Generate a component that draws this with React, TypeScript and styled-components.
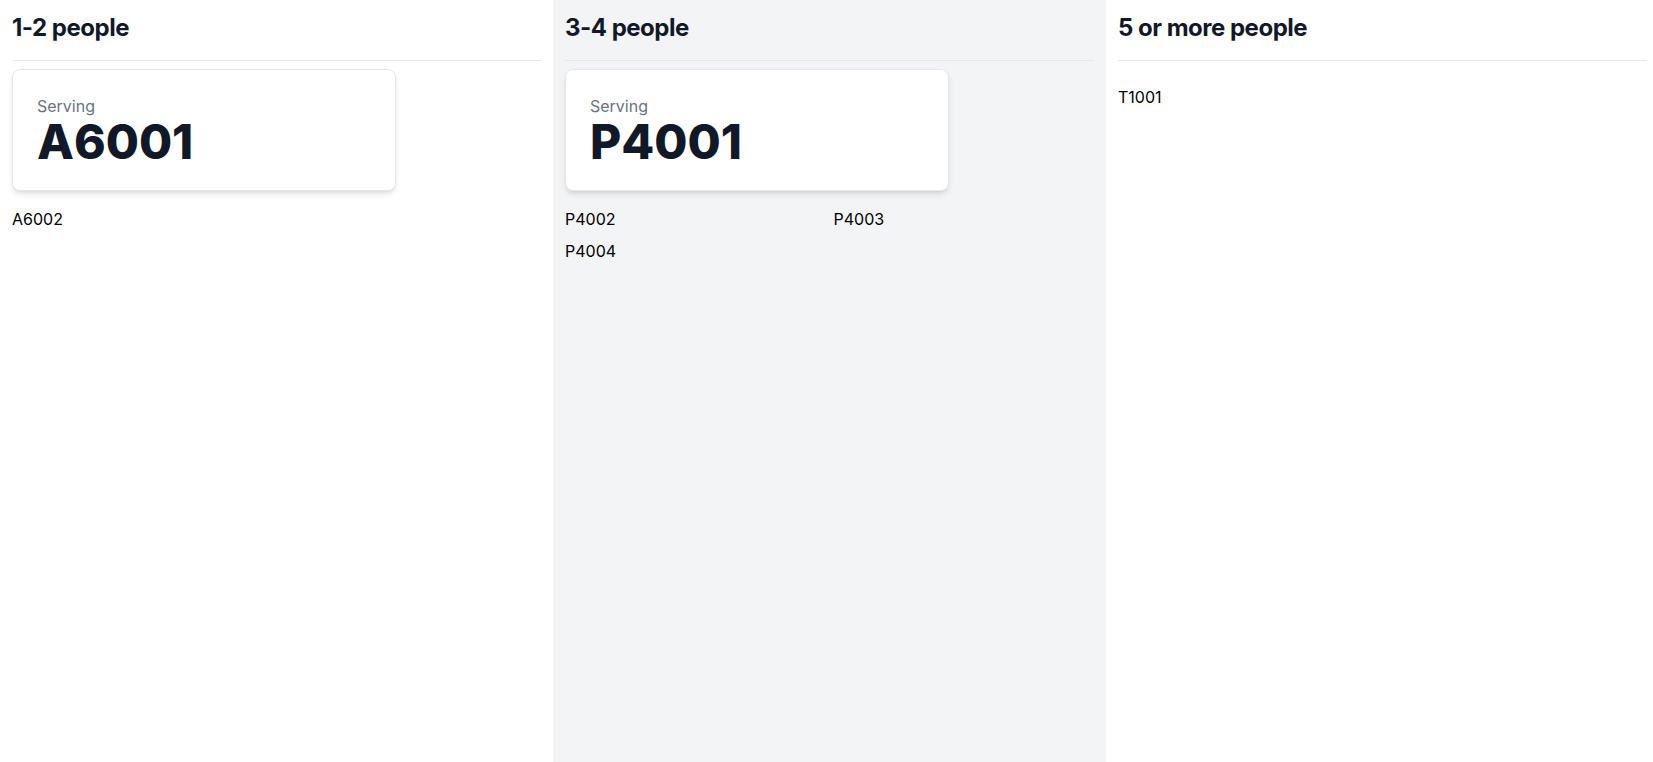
import React from 'react'
import styled, { createGlobalStyle } from 'styled-components'

type Group = {
	title: string
	serving?: string
	waiting: string[]
	shaded?: boolean
}

const groups: Group[] = [
	{ title: '1-2 people', serving: 'A6001', waiting: ['A6002'] },
	{ title: '3-4 people', serving: 'P4001', waiting: ['P4002', 'P4003', 'P4004'], shaded: true },
	{ title: '5 or more people', waiting: ['T1001'] },
]

const GlobalStyle = createGlobalStyle`
	html, body {
		margin: 0;
		padding: 0;
		background: #ffffff;
		overflow: hidden;
	}
	body {
		font-family: Inter, 'Noto Sans', 'Liberation Sans', sans-serif;
		-webkit-font-smoothing: antialiased;
	}
	* {
		box-sizing: border-box;
	}
`

export default function App() {
	return (
		<>
			<GlobalStyle />
			<Board>
				{groups.map((group) => (
					<Column key={group.title} shaded={group.shaded}>
						<Header>
							<Title>{group.title}</Title>
						</Header>
						<Body>
							{group.serving && (
								<ServingCard>
									<ServingLabel>Serving</ServingLabel>
									<ServingNumber>{group.serving}</ServingNumber>
								</ServingCard>
							)}
							<Queue>
								{group.waiting.map((ticket) => (
									<Ticket key={ticket}>{ticket}</Ticket>
								))}
							</Queue>
						</Body>
					</Column>
				))}
			</Board>
		</>
	)
}

// the board runs a few pixels past the right edge of the window
const Board = styled.main`
	display: grid;
	grid-template-columns: repeat(3, minmax(0, 1fr));
	width: calc(100vw + 6px);
	min-height: 100vh;
`

const Column = styled.section<{ shaded?: boolean }>`
	padding: 12px;
	background-color: ${({ shaded }) => (shaded ? '#f3f4f6' : '#ffffff')};
`

const Header = styled.header`
	padding-bottom: 16px;
	border-bottom: 1px solid #e5e7eb;
`

const Title = styled.h2`
	margin: 0;
	font-size: 24px;
	line-height: 32px;
	font-weight: 700;
	color: #111827;
	letter-spacing: -0.5px;
`

const Body = styled.div`
	padding-top: 8px;
`

const ServingCard = styled.div`
	max-width: 384px;
	padding: 24px;
	background: #ffffff;
	border: 1px solid #e5e7eb;
	border-radius: 8px;
	box-shadow: 0 4px 6px -1px rgba(0, 0, 0, 0.1), 0 2px 4px -2px rgba(0, 0, 0, 0.1);
`

const ServingLabel = styled.div`
	font-size: 16px;
	line-height: 24px;
	color: #6b7280;
`

const ServingNumber = styled.div`
	font-size: 48px;
	line-height: 48px;
	font-weight: 800;
	color: #111827;
`

const Queue = styled.ul`
	margin: 16px 0 0;
	padding: 0;
	list-style: none;
	display: grid;
	grid-template-columns: repeat(2, 1fr);
	gap: 8px 8px;
`

const Ticket = styled.li`
	font-size: 16px;
	line-height: 24px;
	color: #000000;
`
